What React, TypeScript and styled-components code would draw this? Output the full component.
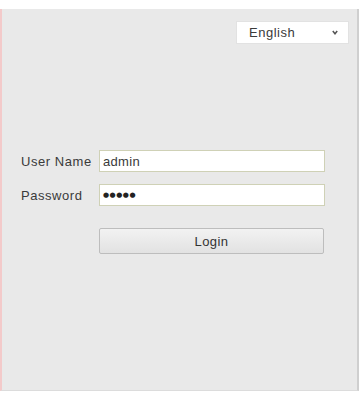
import React from "react";
import styled, { createGlobalStyle } from "styled-components";

const GlobalStyle = createGlobalStyle`
  html, body {
    margin: 0;
    padding: 0;
    background: #ffffff;
    font-family: "Liberation Sans", Arial, sans-serif;
  }
`;

const Page = styled.div`
  width: 362px;
  height: 393px;
  padding-top: 9px;
  box-sizing: border-box;
  background: #ffffff;
`;

const Panel = styled.div`
  width: 359px;
  height: 382px;
  box-sizing: border-box;
  background: #e9e9e9;
  border-left: 2px solid #f3caca;
  border-right: 2px solid #cfcfcf;
  border-bottom: 1px solid #dcdcdc;
  display: flex;
  flex-direction: column;
`;

const TopBar = styled.div`
  display: flex;
  justify-content: flex-end;
  padding: 12px 8px 0 0;
`;

const LangSelect = styled.div`
  width: 113px;
  height: 23px;
  box-sizing: border-box;
  background: #ffffff;
  border: 1px solid #e2e2e2;
  display: flex;
  align-items: center;
  justify-content: space-between;
  padding: 0 10px 0 12px;
  font-size: 13px;
  letter-spacing: 0.5px;
  color: #3a3a3a;
`;

const Chevron = styled.svg`
  width: 6px;
  height: 5px;
`;

const Form = styled.div`
  display: grid;
  grid-template-columns: 78px 226px;
  row-gap: 12px;
  padding: 106px 0 0 19px;
  align-items: center;
`;

const Label = styled.label`
  font-size: 13px;
  letter-spacing: 0.55px;
  color: #3a3a3a;
`;

const Field = styled.div`
  height: 22px;
  box-sizing: border-box;
  background: #ffffff;
  border: 1px solid #cfd1b6;
  display: flex;
  align-items: center;
  padding: 0 3px;
  font-size: 13px;
  letter-spacing: 0.3px;
  color: #3a3a3a;
`;

const Dots = styled.span`
  font-size: 7px;
  letter-spacing: 0.5px;
  color: #222222;
  font-family: "DejaVu Sans", sans-serif;
`;

const LoginButton = styled.button`
  grid-column: 2;
  margin-top: 10px;
  width: 225px;
  height: 26px;
  box-sizing: border-box;
  background: linear-gradient(#f2f2f2, #e2e2e2);
  border: 1px solid #bdbdbd;
  border-radius: 2px;
  font-family: "Liberation Sans", Arial, sans-serif;
  font-size: 13px;
  letter-spacing: 0.4px;
  color: #333333;
  padding: 0;
`;

export default function App() {
  return (
    <Page>
      <GlobalStyle />
      <Panel>
        <TopBar>
          <LangSelect>
            <span>English</span>
            <Chevron viewBox="0 0 6 5">
              <path d="M0.8 1 L3 3.8 L5.2 1" fill="none" stroke="#555" strokeWidth="1.5" />
            </Chevron>
          </LangSelect>
        </TopBar>
        <Form>
          <Label>User Name</Label>
          <Field>admin</Field>
          <Label>Password</Label>
          <Field>
            <Dots>●●●●●</Dots>
          </Field>
          <LoginButton>Login</LoginButton>
        </Form>
      </Panel>
    </Page>
  );
}
